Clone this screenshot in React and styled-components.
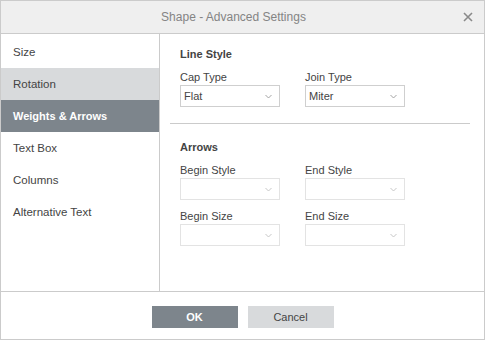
import React, {useState} from 'react';
import styled, {createGlobalStyle} from 'styled-components';

const GlobalStyle = createGlobalStyle`
    html, body {
        margin: 0;
        padding: 0;
        background: #ffffff;
    }
    * {
        box-sizing: border-box;
    }
`;

const menu = ['Size', 'Rotation', 'Weights & Arrows', 'Text Box', 'Columns', 'Alternative Text'];

const Chevron = () => (
    <svg width="7" height="5" viewBox="0 0 7 5">
        <path d="M0.5 1 L3.5 4 L6.5 1" fill="none" stroke="#9a9a9a" strokeWidth="0.9" />
    </svg>
);

const Select = ({value, disabled}) => (
    <SelectBox disabled={disabled}>
        <span>{value}</span>
        <Chevron />
    </SelectBox>
);

const Field = ({label, value, disabled}) => (
    <FieldWrap>
        <Label>{label}</Label>
        <Select value={value} disabled={disabled} />
    </FieldWrap>
);

const App = () => {
    const [active, setActive] = useState(2);

    return (
        <>
            <GlobalStyle />
            <Dialog>
                <Header>
                    <Title>Shape - Advanced Settings</Title>
                    <Close>
                        <svg width="10" height="10" viewBox="0 0 10 10">
                            <path d="M1 1 L9 9 M9 1 L1 9" stroke="#8a8a8a" strokeWidth="1.6" />
                        </svg>
                    </Close>
                </Header>
                <Body>
                    <Sidebar>
                        {
                            menu.map((item, i) => {
                                return (
                                    <MenuItem key={i} state={i === active ? 'active' : i === 1 ? 'hover' : ''} onClick={() => {setActive(i)}}>
                                        {item}
                                    </MenuItem>
                                )
                            })
                        }
                    </Sidebar>
                    <Panel>
                        <Heading>Line Style</Heading>
                        <Row>
                            <Field label="Cap Type" value="Flat" />
                            <Field label="Join Type" value="Miter" />
                        </Row>
                        <Separator />
                        <Heading>Arrows</Heading>
                        <Row>
                            <Field label="Begin Style" disabled />
                            <Field label="End Style" disabled />
                        </Row>
                        <Row>
                            <Field label="Begin Size" disabled />
                            <Field label="End Size" disabled />
                        </Row>
                    </Panel>
                </Body>
                <Footer>
                    <Button primary>OK</Button>
                    <Button>Cancel</Button>
                </Footer>
            </Dialog>
        </>
    )
};

export default App;

const Dialog = styled.div`
    width: 485px;
    height: 340px;
    border: 1px solid #cbcbcb;
    display: flex;
    flex-direction: column;
    font-family: "Liberation Sans", Arial, sans-serif;
    color: #444444;
    background: #ffffff;
`;

const Header = styled.div`
    height: 33px;
    flex-shrink: 0;
    background: #efefef;
    border-bottom: 1px solid #cbcbcb;
    display: flex;
    align-items: center;
    justify-content: center;
    padding-right: 18px;
    position: relative;
`;

const Title = styled.div`
    font-size: 12px;
    color: #848484;
`;

const Close = styled.div`
    position: absolute;
    right: 11px;
    top: 11px;
    width: 10px;
    height: 10px;
    display: flex;
    cursor: pointer;
`;

const Body = styled.div`
    height: 257px;
    display: flex;
    flex-shrink: 0;
`;

const Sidebar = styled.div`
    width: 159px;
    border-right: 1px solid #cbcbcb;
    padding-top: 2px;
    display: flex;
    flex-direction: column;
`;

const MenuItem = styled.div`
    height: 32px;
    display: flex;
    align-items: center;
    padding-left: 12px;
    font-size: 11.5px;
    cursor: pointer;
    background: ${p => p.state === 'active' ? '#7d858c' : p.state === 'hover' ? '#d8dadc' : 'transparent'};
    color: ${p => p.state === 'active' ? '#ffffff' : '#444444'};
    font-weight: ${p => p.state === 'active' ? 'bold' : 'normal'};
    font-size: ${p => p.state === 'active' ? '11px' : '11.5px'};
`;

const Panel = styled.div`
    flex: 1;
    padding: 13px 14px 0 20px;
    display: flex;
    flex-direction: column;
`;

const Heading = styled.div`
    font-size: 11px;
    font-weight: bold;
    line-height: 14px;
    color: #444444;
`;

const Row = styled.div`
    display: grid;
    grid-template-columns: 100px 100px;
    column-gap: 25px;
    margin-top: 9px;
`;

const FieldWrap = styled.div`
    display: flex;
    flex-direction: column;
`;

const Label = styled.div`
    font-size: 11px;
    line-height: 14px;
    margin-bottom: 1px;
    color: #444444;
`;

const SelectBox = styled.div`
    height: 22px;
    border: 1px solid ${p => p.disabled ? '#e3e3e3' : '#cfcfcf'};
    display: flex;
    align-items: center;
    justify-content: space-between;
    padding: 0 7px 0 3px;
    font-size: 11px;
    color: #444444;
    background: #ffffff;

    svg {
        opacity: ${p => p.disabled ? 0.6 : 1};
    }
`;

const Separator = styled.div`
    height: 1px;
    background: #cbcbcb;
    margin: 16px 0 16px -10px;
`;

const Footer = styled.div`
    flex: 1;
    border-top: 1px solid #cbcbcb;
    display: flex;
    justify-content: center;
    align-items: flex-start;
    gap: 10px;
    padding-top: 14px;
`;

const Button = styled.div`
    width: 86px;
    height: 22px;
    display: flex;
    align-items: center;
    justify-content: center;
    font-size: 11px;
    cursor: pointer;
    background: ${p => p.primary ? '#7d858c' : '#d8dadc'};
    color: ${p => p.primary ? '#ffffff' : '#444444'};
    font-weight: ${p => p.primary ? 'bold' : 'normal'};
`;
